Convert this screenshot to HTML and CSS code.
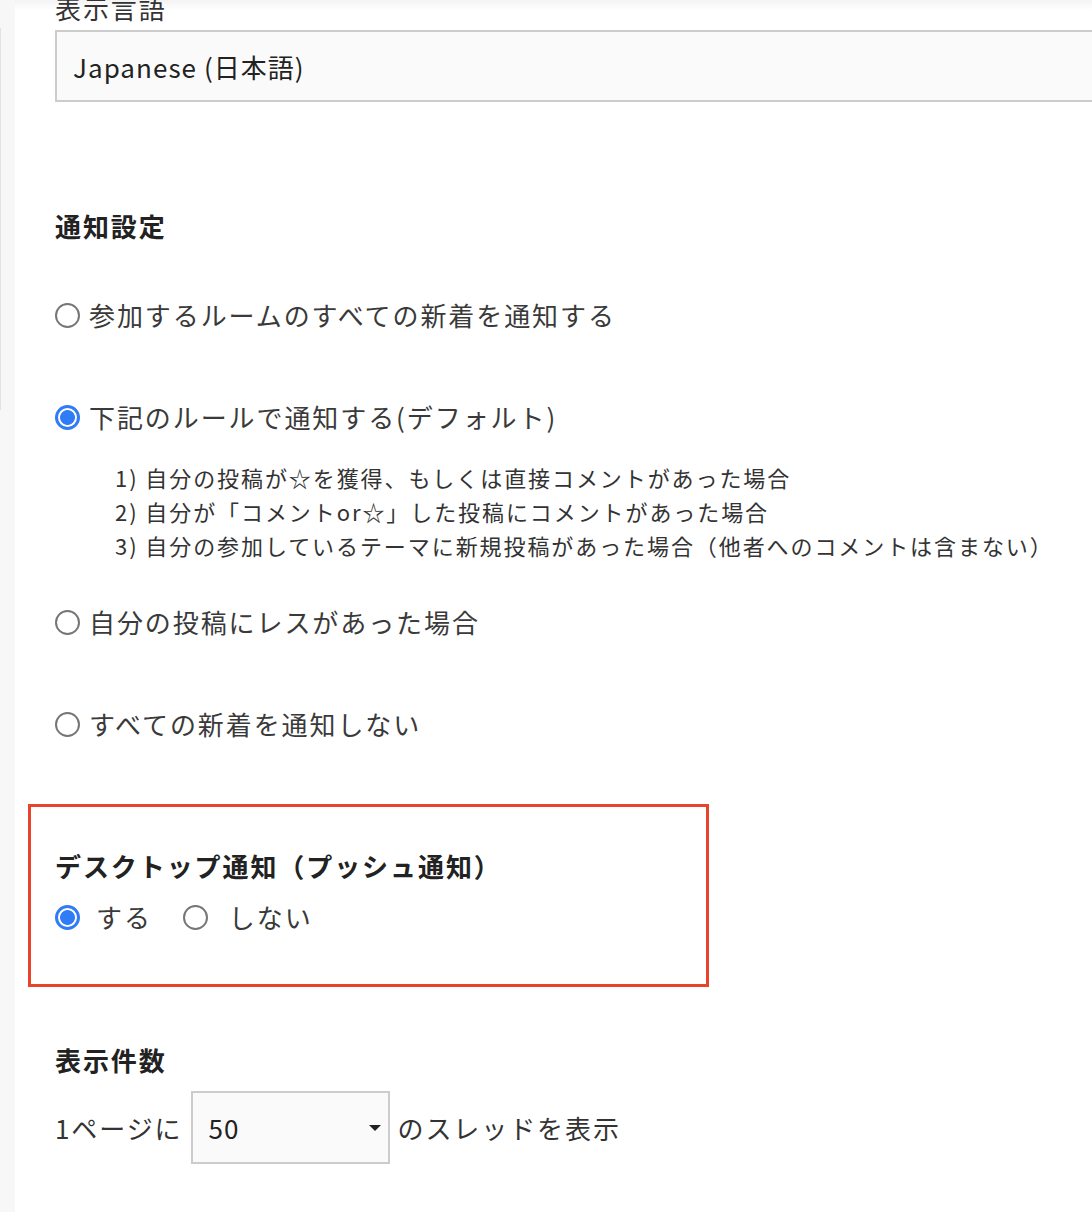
FILE: index.html
```html
<!DOCTYPE html>
<html lang="ja">
<head>
<meta charset="utf-8">
<link rel="stylesheet" href="styles.css">
</head>
<body>
<div class="page">
  <aside class="side"><div class="side-line"></div></aside>
  <main class="main">
    <label class="field-label">表示言語</label>
    <div class="select select-lang"><span>Japanese (日本語)</span></div>

    <h2 class="heading h-notify">通知設定</h2>
    <label class="radio-row r1"><span class="radio"></span><span>参加するルームのすべての新着を通知する</span></label>
    <label class="radio-row r2"><span class="radio on"></span><span>下記のルールで通知する(デフォルト)</span></label>
    <ol class="rules">
      <li>1) 自分の投稿が☆を獲得、もしくは直接コメントがあった場合</li>
      <li>2) 自分が「コメントor☆」した投稿にコメントがあった場合</li>
      <li>3) 自分の参加しているテーマに新規投稿があった場合（他者へのコメントは含まない）</li>
    </ol>
    <label class="radio-row r3"><span class="radio"></span><span>自分の投稿にレスがあった場合</span></label>
    <label class="radio-row r4"><span class="radio"></span><span>すべての新着を通知しない</span></label>

    <section class="push-box">
      <h2 class="heading">デスクトップ通知（プッシュ通知）</h2>
      <div class="inline-radios">
        <label class="radio-row inline"><span class="radio on"></span><span>する</span></label>
        <label class="radio-row inline wide"><span class="radio"></span><span>しない</span></label>
      </div>
    </section>

    <h2 class="heading h-count">表示件数</h2>
    <div class="count-row">
      <span>1ページに</span>
      <div class="select select-count"><span>50</span><span class="caret"></span></div>
      <span>のスレッドを表示</span>
    </div>
  </main>
</div>
</body>
</html>
```

FILE: styles.css
```css
html, body {
  margin: 0;
  padding: 0;
  background: #fff;
}
body {
  font-family: "Noto Sans CJK JP", "Noto Sans", sans-serif;
  color: #333;
  letter-spacing: 0.12em;
  overflow: hidden;
}
.page {
  display: flex;
  min-height: 1212px;
}
.side {
  width: 15px;
  flex: none;
  background: #f7f7f7;
}
.side-line {
  margin-top: 28px;
  width: 1px;
  height: 382px;
  background: #e2e2e6;
}
.main {
  flex: 1;
  padding-left: 40px;
  background: linear-gradient(#f3f3f3, #fff 10px);
  min-width: 0;
  overflow: hidden;
}
.field-label {
  display: block;
  font-size: 26px;
  line-height: 30px;
  margin-top: -7px;
  color: #333;
}
.select {
  box-sizing: border-box;
  border: 2px solid #cccccc;
  background: #fafafa;
  display: flex;
  align-items: center;
  color: #222;
}
.select-lang {
  margin-top: 7px;
  height: 72px;
  width: 1100px;
  padding-left: 16px;
  font-size: 26px;
  letter-spacing: 0.04em;
}
.heading {
  font-size: 26px;
  font-weight: 700;
  line-height: 36px;
  margin: 0;
  color: #222;
}
.h-notify {
  margin-top: 106px;
}
.radio-row {
  display: flex;
  align-items: center;
  font-size: 26px;
  line-height: 40px;
  height: 40px;
  color: #3a3a3a;
  gap: 9px;
}
.radio {
  box-sizing: border-box;
  width: 25px;
  height: 25px;
  border-radius: 50%;
  border: 2px solid #767676;
  background: #fff;
  flex: none;
}
.radio.on {
  border: 3px solid #2f7cf6;
  background: radial-gradient(circle, #2f7cf6 0 7px, #fff 7.8px);
}
.r1 { margin-top: 51px; }
.r2 { margin-top: 62px; }
.r3 { margin-top: 40px; }
.r4 { margin-top: 62px; }
.rules {
  list-style: none;
  margin: 23px 0 0 0;
  padding-left: 60px;
  font-size: 22px;
  line-height: 34px;
  color: #333;
}
.push-box {
  margin-top: 60px;
  margin-left: -27px;
  width: 681px;
  box-sizing: border-box;
  border: 3px solid #e8432b;
  padding: 41px 0 47px 24px;
}
.inline-radios {
  display: flex;
  margin-top: 13px;
  gap: 31px;
}
.radio-row.inline {
  gap: 16px;
}
.radio-row.inline.wide {
  gap: 21px;
}
.h-count {
  margin-top: 55px;
}
.count-row {
  margin-top: 13px;
  display: flex;
  align-items: center;
  font-size: 26px;
  color: #333;
  gap: 8px;
}
.select-count {
  width: 199px;
  height: 73px;
  padding: 0 7px 0 16px;
  justify-content: space-between;
  letter-spacing: 0.04em;
}
.caret {
  width: 0;
  height: 0;
  border-left: 6px solid transparent;
  border-right: 6px solid transparent;
  border-top: 6px solid #222;
}
```
